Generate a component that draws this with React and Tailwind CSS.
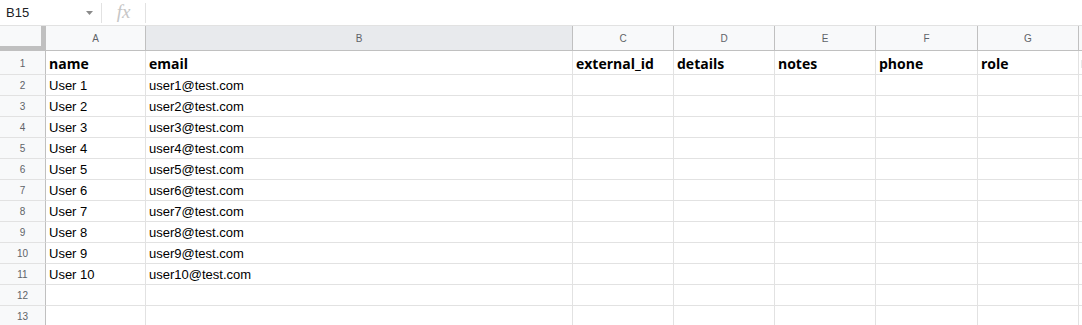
import React from 'react';

const cols = [
  { key: 'A', w: 'w-[100px]' },
  { key: 'B', w: 'w-[427px]' },
  { key: 'C', w: 'w-[101px]' },
  { key: 'D', w: 'w-[101px]' },
  { key: 'E', w: 'w-[101px]' },
  { key: 'F', w: 'w-[102px]' },
  { key: 'G', w: 'w-[101px]' },
  { key: 'H', w: 'w-[101px]' },
];

const headers = ['name', 'email', 'external_id', 'details', 'notes', 'phone', 'role', ''];

const users = Array.from({ length: 10 }, (_, i) => [`User ${i + 1}`, `user${i + 1}@test.com`]);

function RowHeader({ n, tall }) {
  return (
    <div
      className={`w-[46px] shrink-0 ${tall ? 'h-[24px]' : 'h-[21px]'} bg-[#f8f9fa] border-r border-b border-r-[#c0c0c0] border-b-[#e2e2e2] flex items-center justify-center pt-px text-[10px] text-[#5f6368]`}
    >
      {n}
    </div>
  );
}

export default function App() {
  return (
    <div className="w-[1082px] h-[325px] overflow-hidden bg-white font-['Liberation_Sans',Arial,sans-serif]">
      {/* formula bar */}
      <div className="h-[26px] flex items-center border-b border-[#e2e2e2]">
        <div className="w-[101px] h-full flex items-center pl-[6px] pr-[6px] text-[13px] text-[#202124]">
          <span className="flex-1">B15</span>
          <svg width="7" height="4" viewBox="0 0 7 4" className="mr-[2px]">
            <path d="M0 0h7L3.5 4z" fill="#8a8a8a" />
          </svg>
        </div>
        <div className="w-px h-[20px] bg-[#e2e2e2]" />
        <div className="w-[43px] h-full flex items-center justify-center text-[19px] italic text-[#c6c6c6] font-['Liberation_Serif',serif] leading-none pb-[2px]">
          fx
        </div>
        <div className="w-px h-[20px] bg-[#e2e2e2]" />
      </div>

      {/* column headers */}
      <div className="flex h-[25px]">
        <div className="w-[46px] shrink-0 h-full bg-[#f8f9fa] border-r border-b border-[#c0c0c0] relative">
          <div className="absolute right-0 top-0 w-[4px] h-full bg-[#c0c0c0]" />
          <div className="absolute left-0 bottom-0 h-[4px] w-full bg-[#c0c0c0]" />
        </div>
        {cols.map((c) => (
          <div
            key={c.key}
            className={`${c.w} shrink-0 h-full border-r border-b border-[#c0c0c0] flex items-center justify-center text-[10px] text-[#5f6368] ${c.key === 'B' ? 'bg-[#e8eaed]' : 'bg-[#f8f9fa]'}`}
          >
            {c.key === 'H' ? '' : c.key}
          </div>
        ))}
      </div>

      {/* row 1 */}
      <div className="flex">
        <RowHeader n={1} tall />
        {cols.map((c, i) => (
          <div
            key={c.key}
            className={`${c.w} shrink-0 h-[24px] border-r border-b border-[#e2e2e2] flex items-center pl-[3px] pt-[2px] text-[14px] font-bold text-black font-['Open_Sans',sans-serif] overflow-hidden whitespace-nowrap`}
          >
            {c.key === 'H' ? <span className="ml-[-1px] w-[2px] h-[8px] bg-[#e8e8e8]" /> : headers[i]}
          </div>
        ))}
      </div>

      {/* data rows */}
      {Array.from({ length: 12 }, (_, r) => {
        const u = users[r];
        return (
          <div key={r} className="flex">
            <RowHeader n={r + 2} />
            {cols.map((c, i) => (
              <div
                key={c.key}
                className={`${c.w} shrink-0 h-[21px] border-r border-b border-[#e2e2e2] flex items-center pl-[3px] pt-[2px] text-[13px] text-black overflow-hidden whitespace-nowrap`}
              >
                {u && i < 2 ? u[i] : ''}
              </div>
            ))}
          </div>
        );
      })}
    </div>
  );
}
